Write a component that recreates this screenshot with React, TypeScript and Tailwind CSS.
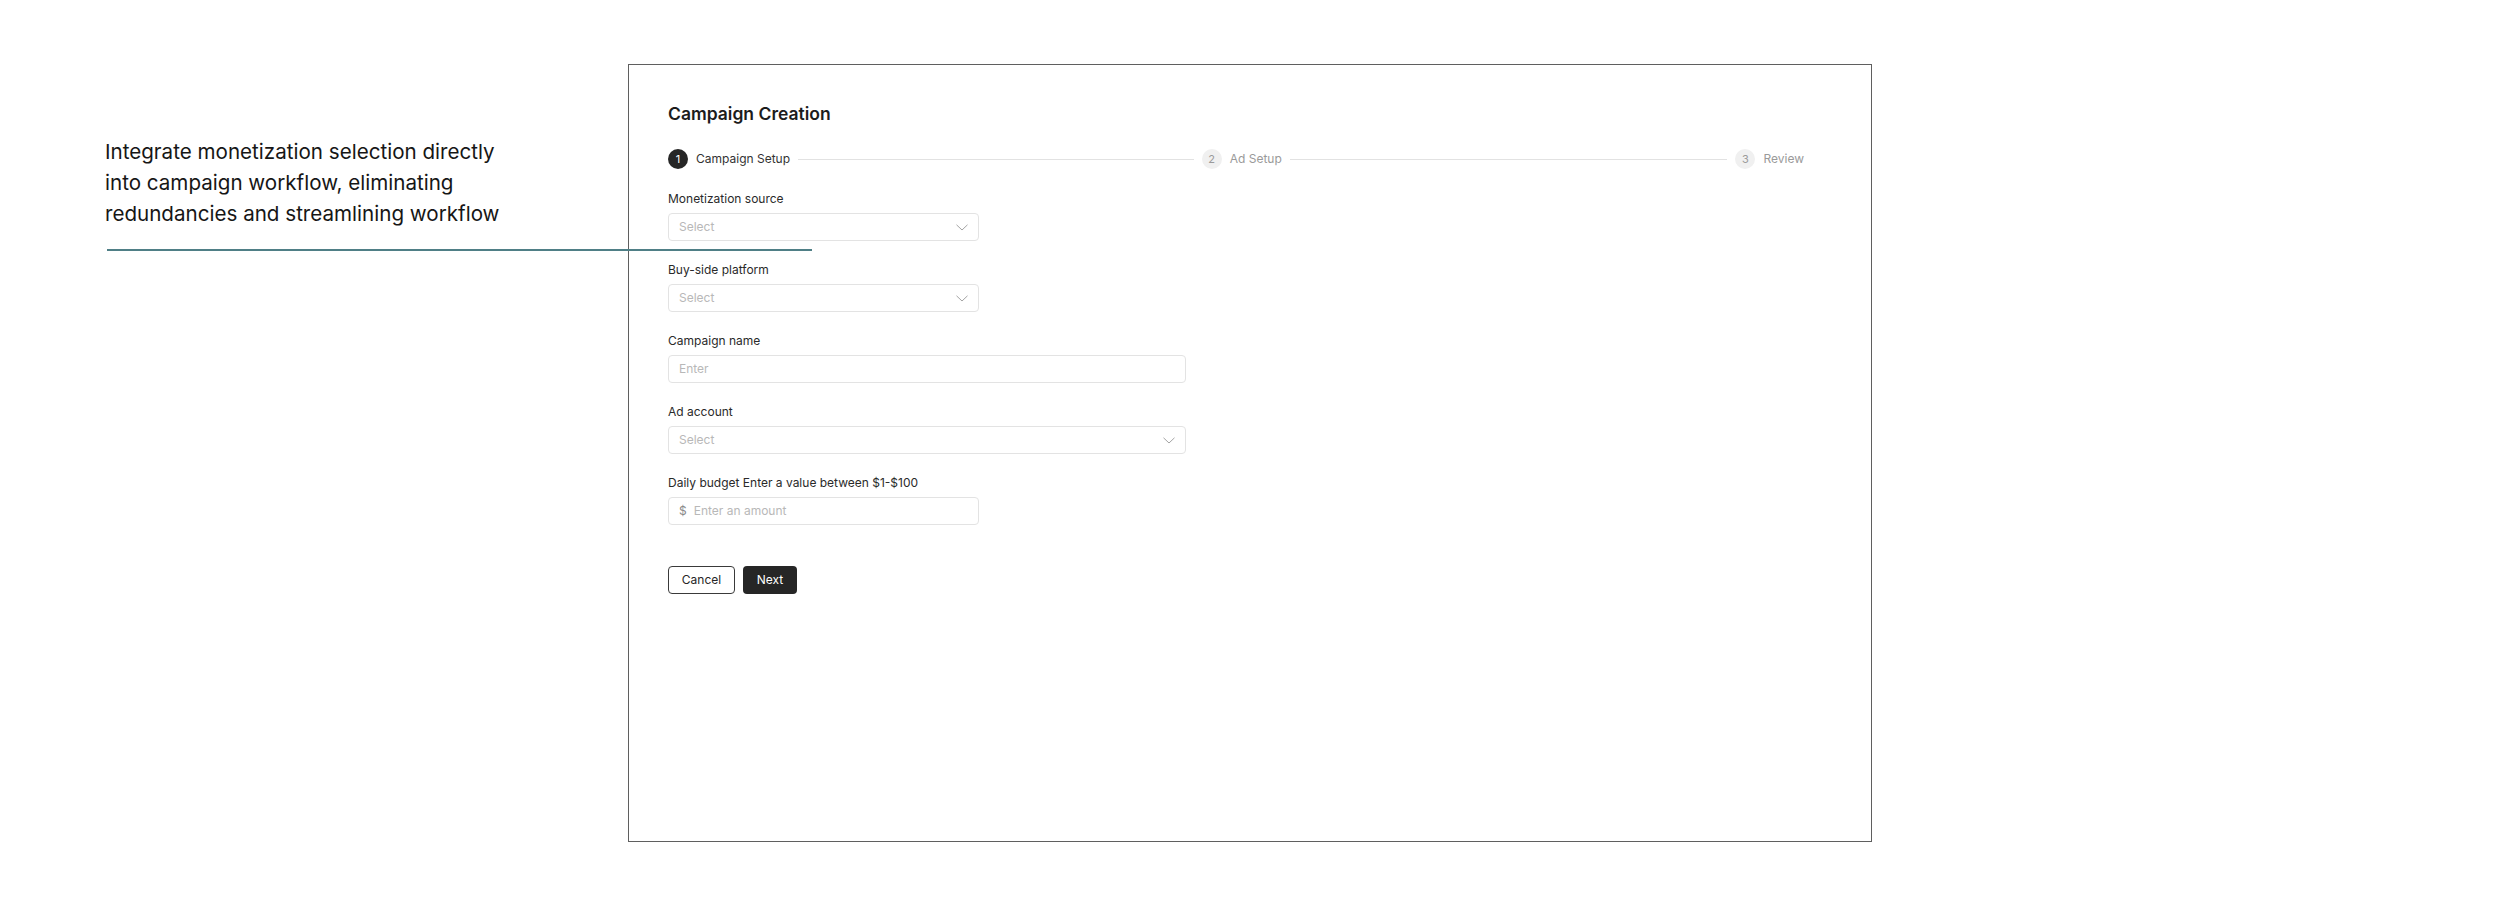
import React from "react";

const Chevron = () => (
  <svg width="12" height="7" viewBox="0 0 12 7" fill="none" className="shrink-0">
    <path d="M0.5 0.8 L6 6 L11.5 0.8" stroke="#a3a3a3" strokeWidth="1" />
  </svg>
);

const Label = ({ children }: { children: React.ReactNode }) => (
  <div className="text-[12px] leading-[16px] text-[#2a2a2a] mb-[6px]">{children}</div>
);

const SelectBox = ({ w }: { w: string }) => (
  <div className={`${w} h-[28px] rounded-[4px] border border-[#e3e3e3] flex items-center justify-between pl-[10px] pr-[10px]`}>
    <span className="text-[12px] text-[#b8b8b8]">Select</span>
    <Chevron />
  </div>
);

export default function App() {
  return (
    <div className="relative w-[2500px] h-[906px] bg-white" style={{ fontFamily: "Inter, 'Noto Sans', sans-serif" }}>
      <div className="flex pl-[105px] pt-[64px]">
        <div className="w-[523px] shrink-0 pt-[72px]">
          <p className="text-[20.6px] leading-[31px] text-[#161616] whitespace-nowrap">
            Integrate monetization selection directly
            <br />
            into campaign workflow, eliminating
            <br />
            redundancies and streamlining workflow
          </p>
        </div>
        <div className="w-[1244px] h-[778px] border border-[#5f5f5f] pl-[39px] pt-[37px]">
          <h1 className="text-[17.5px] leading-[24px] font-semibold text-[#1c1c1c]">Campaign Creation</h1>
          <div className="mt-[23px] w-[1136px] flex items-center text-[12px]">
            <div className="flex-1 flex items-center">
              <div className="w-[20px] h-[20px] rounded-full bg-[#262626] text-white flex items-center justify-center text-[11px] shrink-0">1</div>
              <span className="ml-[8px] text-[#333] shrink-0">Campaign Setup</span>
              <div className="flex-1 h-px bg-[#e2e2e2] mx-[8px]" />
            </div>
            <div className="flex-1 flex items-center">
              <div className="w-[20px] h-[20px] rounded-full bg-[#f0f0f0] text-[#9a9a9a] flex items-center justify-center text-[11px] shrink-0">2</div>
              <span className="ml-[8px] text-[#9a9a9a] shrink-0">Ad Setup</span>
              <div className="flex-1 h-px bg-[#e2e2e2] mx-[8px]" />
            </div>
            <div className="flex items-center shrink-0">
              <div className="w-[20px] h-[20px] rounded-full bg-[#f0f0f0] text-[#9a9a9a] flex items-center justify-center text-[11px]">3</div>
              <span className="ml-[8px] text-[#9a9a9a]">Review</span>
            </div>
          </div>

          <div className="mt-[22px] flex flex-col gap-[21px]">
            <div>
              <Label>Monetization source</Label>
              <SelectBox w="w-[311px]" />
            </div>
            <div>
              <Label>Buy-side platform</Label>
              <SelectBox w="w-[311px]" />
            </div>
            <div>
              <Label>Campaign name</Label>
              <div className="w-[518px] h-[28px] rounded-[4px] border border-[#e3e3e3] flex items-center pl-[10px]">
                <span className="text-[12px] text-[#b8b8b8]">Enter</span>
              </div>
            </div>
            <div>
              <Label>Ad account</Label>
              <SelectBox w="w-[518px]" />
            </div>
            <div>
              <Label>Daily budget Enter a value between $1-$100</Label>
              <div className="w-[311px] h-[28px] rounded-[4px] border border-[#e3e3e3] flex items-center pl-[10px]">
                <span className="text-[12px] text-[#8a8a8a]">$</span>
                <span className="ml-[7px] text-[12px] text-[#b8b8b8]">Enter an amount</span>
              </div>
            </div>
          </div>

          <div className="mt-[41px] flex gap-[8px]">
            <button className="w-[67px] h-[28px] rounded-[4px] border border-[#3a3a3a] bg-white text-[12px] text-[#262626]">Cancel</button>
            <button className="w-[54px] h-[28px] rounded-[4px] bg-[#262626] text-[12px] text-white">Next</button>
          </div>
        </div>
      </div>
      <div className="absolute left-[107px] top-[249px] w-[705px] h-[2px] bg-[#4f7f86]" />
    </div>
  );
}
